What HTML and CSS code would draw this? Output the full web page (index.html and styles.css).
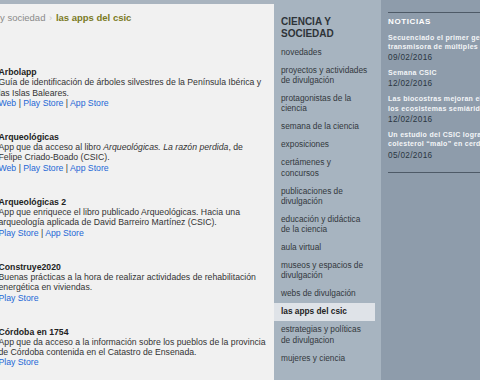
FILE: index.html
```html
<!DOCTYPE html>
<html lang="es">
<head>
    <meta charset="UTF-8">
    <title>las apps del csic</title>
    <link rel="stylesheet" href="styles.css">
</head>
<body>
    <div class="page">
        <div class="main">
            <p class="migas">
                <span class="miga">y sociedad</span>
                <span class="sep">›</span>
                <span class="actual">las apps del csic</span>
            </p>

            <div class="app">
                <p class="titulo">Arbolapp</p>
                <p>Guía de identificación de árboles silvestres de la Península Ibérica y las Islas Baleares.</p>
                <p><a href="#">Web</a> | <a href="#">Play Store</a> | <a href="#">App Store</a></p>
            </div>
            <div class="app">
                <p class="titulo">Arqueológicas</p>
                <p>App que da acceso al libro <em>Arqueológicas. La razón perdida</em>, de Felipe Criado-Boado (CSIC).</p>
                <p><a href="#">Web</a> | <a href="#">Play Store</a> | <a href="#">App Store</a></p>
            </div>
            <div class="app">
                <p class="titulo">Arqueológicas 2</p>
                <p>App que enriquece el libro publicado Arqueológicas. Hacia una arqueología aplicada de David Barreiro Martínez (CSIC).</p>
                <p><a href="#">Play Store</a> | <a href="#">App Store</a></p>
            </div>
            <div class="app">
                <p class="titulo">Construye2020</p>
                <p>Buenas prácticas a la hora de realizar actividades de rehabilitación energética en viviendas.</p>
                <p><a href="#">Play Store</a></p>
            </div>
            <div class="app">
                <p class="titulo">Córdoba en 1754</p>
                <p>App que da acceso a la información sobre los pueblos de la provincia de Córdoba contenida en el Catastro de Ensenada.</p>
                <p><a href="#">Play Store</a></p>
            </div>
        </div>

        <div class="menu">
            <h2>CIENCIA Y SOCIEDAD</h2>
            <ul>
                <li><a href="#">novedades</a></li>
                <li><a href="#">proyectos y actividades de divulgación</a></li>
                <li><a href="#">protagonistas de la ciencia</a></li>
                <li><a href="#">semana de la ciencia</a></li>
                <li><a href="#">exposiciones</a></li>
                <li><a href="#">certámenes y concursos</a></li>
                <li><a href="#">publicaciones de divulgación</a></li>
                <li><a href="#">educación y didáctica de la ciencia</a></li>
                <li><a href="#">aula virtual</a></li>
                <li><a href="#">museos y espacios de divulgación</a></li>
                <li><a href="#">webs de divulgación</a></li>
                <li class="activo"><a href="#">las apps del csic</a></li>
                <li><a href="#">estrategias y políticas de divulgacion</a></li>
                <li><a href="#">mujeres y ciencia</a></li>
            </ul>
        </div>

        <div class="noticias">
            <div class="caja">
                <h3>NOTICIAS</h3>
                <div class="noticia">
                    <a href="#">Secuenciado el primer genoma de la bacteria<br>transmisora de múltiples enfermedades</a>
                    <p class="fecha">09/02/2016</p>
                </div>
                <div class="noticia">
                    <a href="#">Semana CSIC</a>
                    <p class="fecha">12/02/2016</p>
                </div>
                <div class="noticia">
                    <a href="#">Las biocostras mejoran el suelo de<br>los ecosistemas semiáridos</a>
                    <p class="fecha">12/02/2016</p>
                </div>
                <div class="noticia">
                    <a href="#">Un estudio del CSIC logra reducir el<br>colesterol “malo” en cerdos</a>
                    <p class="fecha">05/02/2016</p>
                </div>
            </div>
        </div>
    </div>
</body>
</html>
```

FILE: styles.css
```css
body {
    margin: 0;
    padding: 0;
    background: #a9b4bf;
    font-family: "Liberation Sans", Arial, sans-serif;
}
.page {
    display: flex;
    height: 380px;
    overflow: hidden;
}
p {
    margin: 0;
}
a {
    text-decoration: none;
}
/* contenido */
.main {
    width: 267px;
    flex-shrink: 0;
    margin-top: 4px;
    padding-right: 7px;
    background: #f1f1f1;
    overflow: hidden;
    font-size: 8.7px;
    line-height: 10.3px;
    color: #333;
}
.migas {
    padding-top: 8px;
    font-size: 9.5px;
    line-height: 12px;
    color: #8a8a8a;
    margin-bottom: 43px;
}
.migas .sep {
    color: #c9c9c9;
    margin: 0 1px;
}
.migas .actual {
    font-weight: bold;
    color: #7a7a1f;
}
.app {
    margin-left: -1.5px;
    margin-bottom: 23.7px;
}
.app .titulo {
    font-weight: bold;
    color: #222;
}
.app a {
    color: #2468d6;
}
/* menu lateral */
.menu {
    width: 107px;
    flex-shrink: 0;
    background: #a7b4c0;
    padding-top: 16px;
}
.menu h2 {
    margin: 0 0 3px 7px;
    font-size: 10px;
    line-height: 12px;
    color: #2e3338;
}
.menu ul {
    list-style: none;
    margin: 0 6px 0 0;
    padding: 0;
}
.menu li {
    padding: 3.85px 6.5px 3.85px 7px;
    font-size: 8.3px;
    line-height: 10.3px;
}
.menu li a {
    color: #33383d;
}
.menu li.activo {
    background: #dfe3e8;
}
.menu li.activo a {
    font-weight: bold;
    color: #222;
}
/* noticias */
.noticias {
    flex: 1;
    background: #8e9cab;
    padding: 12px 0 0 7px;
    overflow: hidden;
}
.caja {
    width: 180px;
    border-top: 1.5px solid #4e5a67;
    border-bottom: 1.5px solid #4e5a67;
    padding: 4px 0 7px;
    white-space: nowrap;
}
.caja h3 {
    margin: 0 0 5.5px;
    font-size: 8px;
    line-height: 10px;
    letter-spacing: 0.6px;
    color: #fff;
}
.noticia {
    margin-bottom: 5px;
    font-size: 7px;
    line-height: 9.7px;
    letter-spacing: 0.3px;
}
.noticia a {
    font-weight: bold;
    color: #f3f5f7;
}
.noticia .fecha {
    margin-top: 1.5px;
    font-size: 8.2px;
    letter-spacing: 0.35px;
    color: #2b3642;
}
```
